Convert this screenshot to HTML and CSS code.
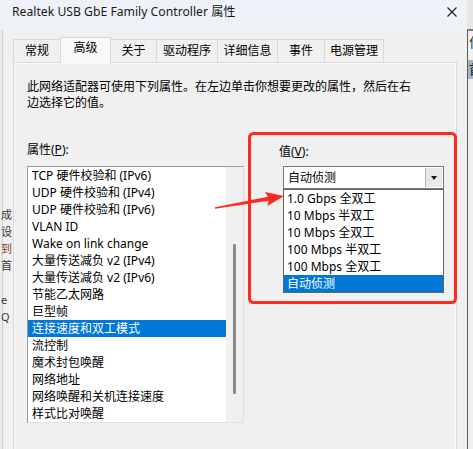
FILE: index.html
```html
<!DOCTYPE html>
<html lang="zh-CN">
<head>
<meta charset="utf-8">
<title>Realtek USB GbE Family Controller 属性</title>
<link rel="stylesheet" href="styles.css">
</head>
<body>
<div class="screen">
  <div class="dialog">
    <div class="titlebar">
      <span class="title">Realtek USB GbE Family Controller 属性</span>
      <svg class="close" width="10" height="10" viewBox="0 0 10 10"><path d="M0.5 0.5L9.5 9.5M9.5 0.5L0.5 9.5" stroke="#1b1b1b" stroke-width="1.1" fill="none"/></svg>
    </div>
    <div class="dbody">
      <div class="ghost">
        <div class="ghost-text">
          <span>成</span><span>设</span><span class="red">到</span><span>首</span><span>&nbsp;</span><span>e</span><span>Q</span>
        </div>
      </div>
      <div class="main">
        <div class="tabs">
          <div class="tab w48">常规</div>
          <div class="tab active w51">高级</div>
          <div class="tab w47">关于</div>
          <div class="tab w62">驱动程序</div>
          <div class="tab w61">详细信息</div>
          <div class="tab w48">事件</div>
          <div class="tab w60">电源管理</div>
        </div>
        <div class="panel">
          <p class="desc">此网络适配器可使用下列属性。在左边单击你想要更改的属性，然后在右<br>边选择它的值。</p>
          <div class="cols">
            <div class="col-left">
              <div class="label">属性(<u>P</u>):</div>
              <div class="listbox">
                <div class="items">
                  <div class="item">TCP 硬件校验和 (IPv6)</div>
                  <div class="item">UDP 硬件校验和 (IPv4)</div>
                  <div class="item">UDP 硬件校验和 (IPv6)</div>
                  <div class="item">VLAN ID</div>
                  <div class="item">Wake on link change</div>
                  <div class="item">大量传送减负 v2 (IPv4)</div>
                  <div class="item">大量传送减负 v2 (IPv6)</div>
                  <div class="item">节能乙太网路</div>
                  <div class="item">巨型帧</div>
                  <div class="item sel">连接速度和双工模式</div>
                  <div class="item">流控制</div>
                  <div class="item">魔术封包唤醒</div>
                  <div class="item">网络地址</div>
                  <div class="item">网络唤醒和关机连接速度</div>
                  <div class="item">样式比对唤醒</div>
                </div>
                <div class="scroll"><div class="thumb"></div></div>
              </div>
            </div>
            <div class="col-right">
              <div class="label vlabel">值(<u>V</u>):</div>
              <div class="combo">
                <div class="combo-text">自动侦测</div>
                <div class="combo-btn"><span class="tri"></span></div>
                <div class="dropdown">
                  <div class="ditem">1.0 Gbps 全双工</div>
                  <div class="ditem">10 Mbps 半双工</div>
                  <div class="ditem">10 Mbps 全双工</div>
                  <div class="ditem">100 Mbps 半双工</div>
                  <div class="ditem">100 Mbps 全双工</div>
                  <div class="ditem sel">自动侦测</div>
                </div>
              </div>
            </div>
          </div>
        </div>
      </div>
    </div>
  </div>
  <div class="behind">
    <div class="b-top"></div>
    <div class="b-rest">
      <div class="b-glyph">作</div>
      <div class="b-band">首</div>
    </div>
  </div>
  <svg class="annot" width="473" height="449" viewBox="0 0 473 449">
    <rect x="249.5" y="133.5" width="206" height="169" rx="4" ry="4" fill="none" stroke="#ff2a1e" stroke-width="3"/>
    <polygon points="215.1,208.8 268.5,200.7 267.4,205.9 284,196 265,192.1 267.9,196.7 214.9,207.2" fill="#ff2a1e"/>
  </svg>
</div>
</body>
</html>
```
FILE: styles.css
```css
* { box-sizing: border-box; }
html, body { margin: 0; padding: 0; }
body {
  font-family: "Noto Sans", "Noto Sans CJK SC", sans-serif;
  font-size: 12px;
  color: #000;
  background: #f0f0f0;
}
.screen {
  position: relative;
  width: 473px;
  height: 449px;
  overflow: hidden;
  display: flex;
  background: #f0f0f0;
}
.dialog {
  width: 467px;
  display: flex;
  flex-direction: column;
}
.titlebar {
  height: 30px;
  flex: none;
  background: #eef2f8;
  display: flex;
  justify-content: space-between;
  align-items: flex-start;
  padding: 0 10px 0 12px;
}
.title {
  margin-top: 4px;
  line-height: 16px;
  font-size: 12.2px;
  color: #1a1a1a;
  white-space: nowrap;
}
.close { margin-top: 7px; display: block; }
.dbody {
  flex: 1;
  display: flex;
}
.ghost {
  width: 13px;
  flex: none;
  background: linear-gradient(to right, #ececec 0 2px, #d2d2d2 2px 3px, #f0f0f0 3px);
}
.ghost-text {
  margin-top: 176px;
  padding-left: 1px;
  display: flex;
  flex-direction: column;
  line-height: 17px;
  font-size: 11px;
  color: #3a3a3a;
}
.ghost-text .red { color: #8a3a2a; }
.main {
  width: 454px;
  display: flex;
  flex-direction: column;
  padding-top: 7px;
}
.tabs {
  height: 25px;
  flex: none;
  display: flex;
  align-items: flex-end;
}
.tab {
  height: 23px;
  border: 1px solid #d9d9d9;
  border-bottom: none;
  margin-right: -1px;
  background: #f0f0f0;
  text-align: center;
  padding-top: 3px;
  line-height: 16px;
  white-space: nowrap;
}
.tab.active {
  height: 26px;
  margin-bottom: -1px;
  position: relative;
  z-index: 2;
  background: #f9f9f9;
  padding-top: 2px;
}
.w47 { width: 47px; }
.w48 { width: 48px; }
.w51 { width: 51px; }
.w60 { width: 60px; }
.w61 { width: 61px; }
.w62 { width: 62px; }
.panel {
  width: 444px;
  height: 400px;
  flex: none;
  border: 1px solid #d9d9d9;
  background: #f0f0f0;
  box-shadow: inset 0 0 0 1px #f9f9f9;
  padding: 16px 0 0 13px;
}
.desc {
  margin: 0;
  line-height: 16px;
  white-space: nowrap;
}
.cols {
  display: flex;
  margin-top: 31px;
}
.col-left { width: 217px; flex: none; }
.col-right { flex: 1; }
.label { line-height: 16px; white-space: nowrap; }
.label u { text-underline-offset: 1px; }
.listbox {
  margin-top: 8px;
  height: 257px;
  border: 1px solid;
  border-color: #9a9a9a #e0e0e0 #e0e0e0 #9a9a9a;
  background: #fff;
  display: flex;
  overflow: hidden;
}
.items { width: 198px; flex: none; }
.item {
  height: 17px;
  line-height: 17px;
  padding-left: 4px;
  white-space: nowrap;
}
.sel { background: #0078d7; color: #fff; }
.scroll {
  width: 17px;
  flex: none;
  background: #f0f0f0;
}
.thumb {
  margin-top: 77px;
  margin-left: 7px;
  width: 2.5px;
  height: 150px;
  border-radius: 1px;
  background: #8a8a8a;
}
.vlabel { margin: 2px 0 0 35px; }
.combo {
  position: relative;
  margin: 6px 0 0 39px;
  width: 161px;
  height: 23px;
  border: 1px solid #767676;
  background: #fff;
  display: flex;
}
.combo-text {
  flex: 1;
  padding-left: 4px;
  line-height: 21px;
  white-space: nowrap;
}
.combo-btn {
  width: 17px;
  flex: none;
  margin: 1px 1px 1px 0;
  background: #e8e8e8;
  border-left: 1px solid #b4b4b4;
  display: flex;
  align-items: center;
  justify-content: center;
}
.tri {
  width: 0;
  height: 0;
  border-left: 3.5px solid transparent;
  border-right: 3.5px solid transparent;
  border-top: 4px solid #111;
  margin-top: 1px;
}
.dropdown {
  position: absolute;
  top: calc(100% + 1px);
  left: -1px;
  width: 161px;
  border: 1px solid #646464;
  background: #fff;
  z-index: 3;
}
.ditem {
  height: 17px;
  line-height: 17px;
  padding-left: 3px;
  white-space: nowrap;
}
.behind {
  width: 6px;
  flex: none;
  display: flex;
  flex-direction: column;
  overflow: hidden;
}
.b-top { height: 29px; background: #e6e6e6; flex: none; }
.b-rest {
  flex: 1;
  border-left: 1px solid #5c5c5c;
  border-top: 2px solid #7a7a7a;
  background: #f0f0f0;
  font-size: 13px;
  line-height: 16px;
  color: #222;
}
.b-glyph { margin-top: 3px; padding-left: 1px; color: #333; }
.b-band {
  margin-top: 10px;
  height: 19px;
  background: #a3b3ca;
  padding-left: 1px;
  line-height: 19px;
  color: #1a1a1a;
}
.annot {
  position: absolute;
  left: 0;
  top: 0;
  pointer-events: none;
  z-index: 10;
}
```
